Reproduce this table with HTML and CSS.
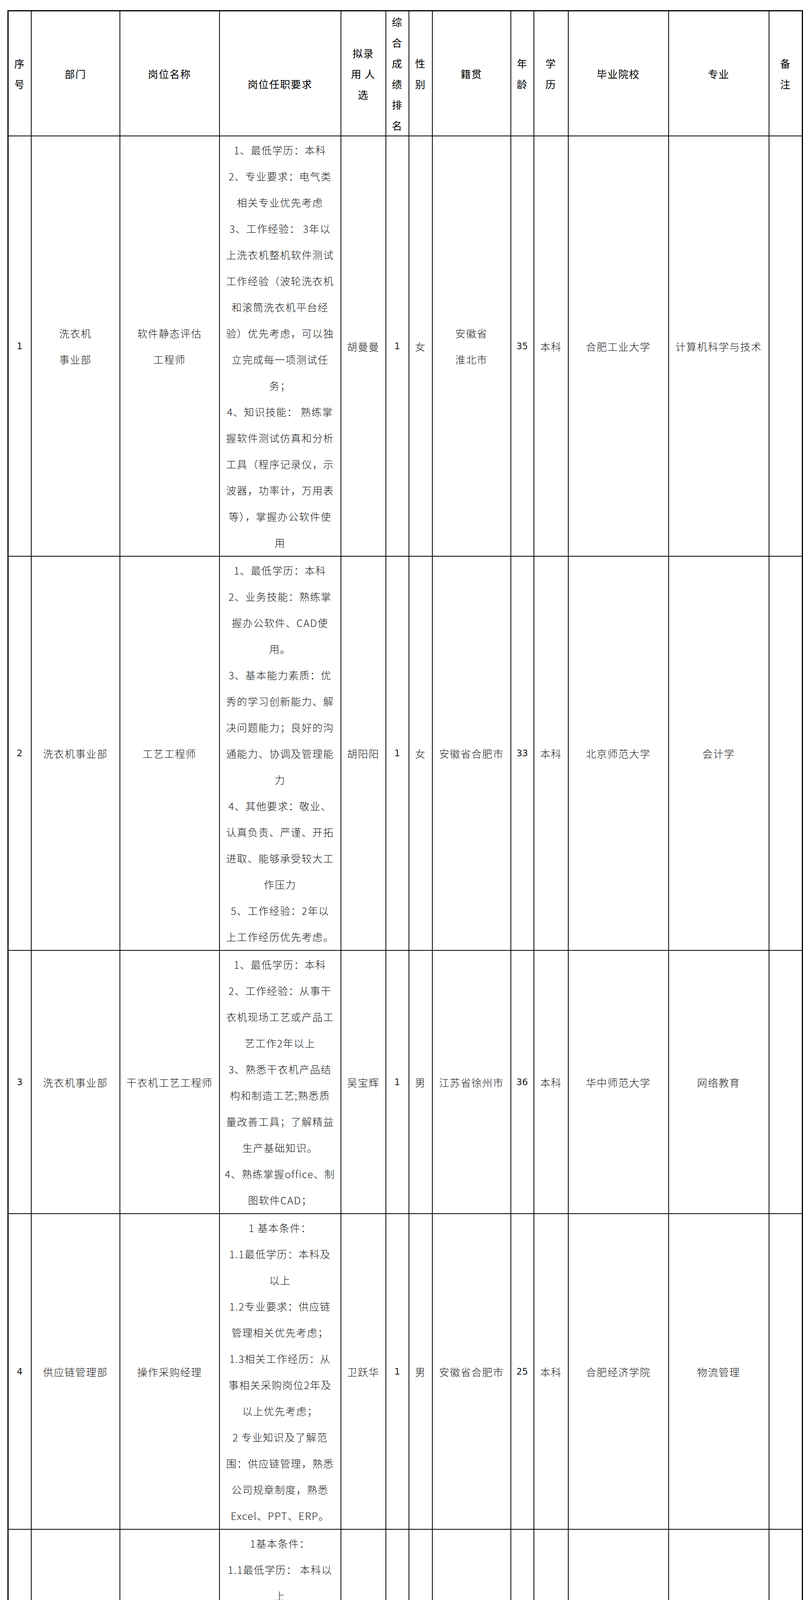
FILE: index.html
```html
<!DOCTYPE html>
<html lang="zh-CN">
<head>
<meta charset="utf-8">
<title>拟录用人选公示</title>
<link rel="stylesheet" href="styles.css">
</head>
<body>
<table class="roster">
  <colgroup>
    <col class="c-no"><col class="c-dept"><col class="c-post"><col class="c-req"><col class="c-name"><col class="c-rank"><col class="c-sex"><col class="c-home"><col class="c-age"><col class="c-edu"><col class="c-school"><col class="c-major"><col class="c-note">
  </colgroup>
  <thead>
    <tr>
      <th><span class="ln">序</span><span class="ln">号</span></th>
      <th><span class="ln">部门</span></th>
      <th><span class="ln">岗位名称</span></th>
      <th class="req-head"><span class="ln">岗位任职要求</span></th>
      <th><span class="ln">拟录</span><span class="ln">用 人</span><span class="ln">选</span></th>
      <th><span class="ln">综</span><span class="ln">合</span><span class="ln">成</span><span class="ln">绩</span><span class="ln">排</span><span class="ln">名</span></th>
      <th><span class="ln">性</span><span class="ln">别</span></th>
      <th><span class="ln">籍贯</span></th>
      <th><span class="ln">年</span><span class="ln">龄</span></th>
      <th><span class="ln">学</span><span class="ln">历</span></th>
      <th><span class="ln">毕业院校</span></th>
      <th><span class="ln">专业</span></th>
      <th><span class="ln">备</span><span class="ln">注</span></th>
    </tr>
  </thead>
  <tbody>
    <tr>
      <td class="num">1</td>
      <td><span class="ln">洗衣机</span><span class="ln">事业部</span></td>
      <td><span class="ln">软件静态评估</span><span class="ln">工程师</span></td>
      <td class="req">
        <span class="ln">1、最低学历：本科</span>
        <span class="ln">2、专业要求：电气类</span>
        <span class="ln">相关专业优先考虑</span>
        <span class="ln">3、工作经验： 3年以</span>
        <span class="ln">上洗衣机整机软件测试</span>
        <span class="ln">工作经验（波轮洗衣机</span>
        <span class="ln">和滚筒洗衣机平台经</span>
        <span class="ln">验）优先考虑，可以独</span>
        <span class="ln">立完成每一项测试任</span>
        <span class="ln">务；</span>
        <span class="ln">4、知识技能： 熟练掌</span>
        <span class="ln">握软件测试仿真和分析</span>
        <span class="ln">工具（程序记录仪，示</span>
        <span class="ln">波器，功率计，万用表</span>
        <span class="ln">等），掌握办公软件使</span>
        <span class="ln">用</span>
      </td>
      <td>胡曼曼</td>
      <td class="num">1</td>
      <td>女</td>
      <td><span class="ln">安徽省</span><span class="ln">淮北市</span></td>
      <td class="num">35</td>
      <td>本科</td>
      <td>合肥工业大学</td>
      <td>计算机科学与技术</td>
      <td></td>
    </tr>
    <tr>
      <td class="num">2</td>
      <td>洗衣机事业部</td>
      <td>工艺工程师</td>
      <td class="req">
        <span class="ln">1、最低学历：本科</span>
        <span class="ln">2、业务技能：熟练掌</span>
        <span class="ln">握办公软件、CAD使</span>
        <span class="ln">用。</span>
        <span class="ln">3、基本能力素质：优</span>
        <span class="ln">秀的学习创新能力、解</span>
        <span class="ln">决问题能力；良好的沟</span>
        <span class="ln">通能力、协调及管理能</span>
        <span class="ln">力</span>
        <span class="ln">4、其他要求：敬业、</span>
        <span class="ln">认真负责、严谨、开拓</span>
        <span class="ln">进取、能够承受较大工</span>
        <span class="ln">作压力</span>
        <span class="ln">5、工作经验：2年以</span>
        <span class="ln">上工作经历优先考虑。</span>
      </td>
      <td>胡阳阳</td>
      <td class="num">1</td>
      <td>女</td>
      <td>安徽省合肥市</td>
      <td class="num">33</td>
      <td>本科</td>
      <td>北京师范大学</td>
      <td>会计学</td>
      <td></td>
    </tr>
    <tr>
      <td class="num">3</td>
      <td>洗衣机事业部</td>
      <td>干衣机工艺工程师</td>
      <td class="req">
        <span class="ln">1、最低学历：本科</span>
        <span class="ln">2、工作经验：从事干</span>
        <span class="ln">衣机现场工艺或产品工</span>
        <span class="ln">艺工作2年以上</span>
        <span class="ln">3、熟悉干衣机产品结</span>
        <span class="ln">构和制造工艺;熟悉质</span>
        <span class="ln">量改善工具；了解精益</span>
        <span class="ln">生产基础知识。</span>
        <span class="ln">4、熟练掌握office、制</span>
        <span class="ln">图软件CAD；</span>
      </td>
      <td>吴宝辉</td>
      <td class="num">1</td>
      <td>男</td>
      <td>江苏省徐州市</td>
      <td class="num">36</td>
      <td>本科</td>
      <td>华中师范大学</td>
      <td>网络教育</td>
      <td></td>
    </tr>
    <tr>
      <td class="num">4</td>
      <td>供应链管理部</td>
      <td>操作采购经理</td>
      <td class="req">
        <span class="ln">1 基本条件：</span>
        <span class="ln">1.1最低学历：本科及</span>
        <span class="ln">以上</span>
        <span class="ln">1.2专业要求：供应链</span>
        <span class="ln">管理相关优先考虑；</span>
        <span class="ln">1.3相关工作经历：从</span>
        <span class="ln">事相关采购岗位2年及</span>
        <span class="ln">以上优先考虑；</span>
        <span class="ln">2 专业知识及了解范</span>
        <span class="ln">围：供应链管理，熟悉</span>
        <span class="ln">公司规章制度，熟悉</span>
        <span class="ln">Excel、PPT、ERP。</span>
      </td>
      <td>卫跃华</td>
      <td class="num">1</td>
      <td>男</td>
      <td>安徽省合肥市</td>
      <td class="num">25</td>
      <td>本科</td>
      <td>合肥经济学院</td>
      <td>物流管理</td>
      <td></td>
    </tr>
    <tr>
      <td class="num">5</td>
      <td>用户与产品中心</td>
      <td>结构工程师</td>
      <td class="req">
        <span class="ln">1基本条件：</span>
        <span class="ln">1.1最低学历： 本科以</span>
        <span class="ln">上</span>
        <span class="ln">1.2相关工作经历： 相</span>
        <span class="ln">关行业3年以上工作经</span>
        <span class="ln">验优先考虑；</span>
        <span class="ln">2专业知识及了解范</span>
        <span class="ln">围： 精通冰箱、洗衣机</span>
        <span class="ln">结构设计及工艺流程；</span>
        <span class="ln">掌握机械设计、模具设</span>
        <span class="ln">计、制冷系统、电气系</span>
        <span class="ln">统相关知识， 掌握冰</span>
        <span class="ln">箱、洗衣机主要市场的</span>
        <span class="ln">发展情况， 了解质量管</span>
        <span class="ln">理相关知识、各国制冷</span>
        <span class="ln">类产品法律法规及相应</span>
        <span class="ln">标准。</span>
        <span class="ln">3业务技能： 熟练掌握</span>
        <span class="ln">UG三维设计等绘图软</span>
        <span class="ln">件， 掌握办公软件使</span>
        <span class="ln">用， 英语四级。</span>
      </td>
      <td>李康康</td>
      <td class="num">1</td>
      <td>男</td>
      <td>安徽省安庆市</td>
      <td class="num">24</td>
      <td>本科</td>
      <td>吉林化工学院</td>
      <td><span class="ln">机械设计制造</span><span class="ln">及其自动化</span></td>
      <td></td>
    </tr>
    <tr>
      <td class="num">6</td>
      <td>洗衣机事业部</td>
      <td>性能开发工程师</td>
      <td class="req">
        <span class="ln">1.1最低学历： 大学本</span>
        <span class="ln">科</span>
        <span class="ln">1.2专业： 纺织、 化</span>
        <span class="ln">学、 电子、 电气专业优</span>
        <span class="ln">先考虑。</span>
        <span class="ln">1.3工作经验： 从事洗</span>
        <span class="ln">衣机性能开发工作3年</span>
        <span class="ln">以上优先考虑， 具有洗</span>
        <span class="ln">衣机、 干衣机国际标准</span>
        <span class="ln">性能的开发能力（欧</span>
        <span class="ln">标、 澳标、 日标、 沙</span>
        <span class="ln">特、 美洲能源之星以及</span>
        <span class="ln">全球其他国家和地区所</span>
        <span class="ln">需的洗衣机干衣机标</span>
        <span class="ln">准。</span>
        <span class="ln">1.4技能： 掌握办公软</span>
        <span class="ln">件使用。</span>
        <span class="ln">1.5基本能力素质： 优</span>
        <span class="ln">秀的学习创新能力、 解</span>
        <span class="ln">决问题能力； 良好的沟</span>
        <span class="ln">通能力、 协调能力； 一</span>
        <span class="ln">定的团队建设能力</span>
      </td>
      <td>杨超</td>
      <td class="num">1</td>
      <td>男</td>
      <td>安徽省合肥市</td>
      <td class="num">45</td>
      <td class="strong">大专</td>
      <td>安徽广播电视大学</td>
      <td>计算机应用及技术</td>
      <td class="note">
        <span class="ln">行业</span><span class="ln">经验</span><span class="ln">丰</span><span class="ln">富；</span><span class="ln">具备</span><span class="ln">外销</span><span class="ln">经</span><span class="ln">验。</span>
      </td>
    </tr>
  </tbody>
</table>
</body>
</html>
```

FILE: styles.css
```css
html, body {
  margin: 0;
  padding: 0;
  background: #ffffff;
}

.roster {
  margin: 26px 0 0 19px;
  width: 2034px;
  table-layout: fixed;
  border-collapse: collapse;
  border: 3px solid #000;
  font-family: "Noto Sans CJK SC", "Noto Sans", sans-serif;
  font-size: 26px;
  font-weight: 300;
  letter-spacing: 1.6px;
  color: #1a1a1a;
}

.c-no { width: 59px; }
.c-dept { width: 227px; }
.c-post { width: 255px; }
.c-req { width: 311px; }
.c-name { width: 115px; }
.c-rank { width: 59px; }
.c-sex { width: 60px; }
.c-home { width: 201px; }
.c-age { width: 59px; }
.c-edu { width: 88px; }
.c-school { width: 257px; }
.c-major { width: 257px; }
.c-note { width: 86px; }

.roster th,
.roster td {
  border: 2px solid #000;
  text-align: center;
  vertical-align: middle;
  white-space: nowrap;
}

.roster th {
  padding: 0;
  line-height: 53px;
  font-weight: 400;
  color: #000;
}

.roster td {
  padding: 1px 0;
  line-height: 67px;
}

.ln {
  display: block;
  white-space: nowrap;
}

.req-head {
  padding-top: 52px !important;
}

.num {
  font-family: "DejaVu Sans", "Liberation Sans", sans-serif;
  font-size: 23px;
  font-weight: 400;
  letter-spacing: 0;
}

.strong {
  font-weight: 500;
  color: #000;
}
```
